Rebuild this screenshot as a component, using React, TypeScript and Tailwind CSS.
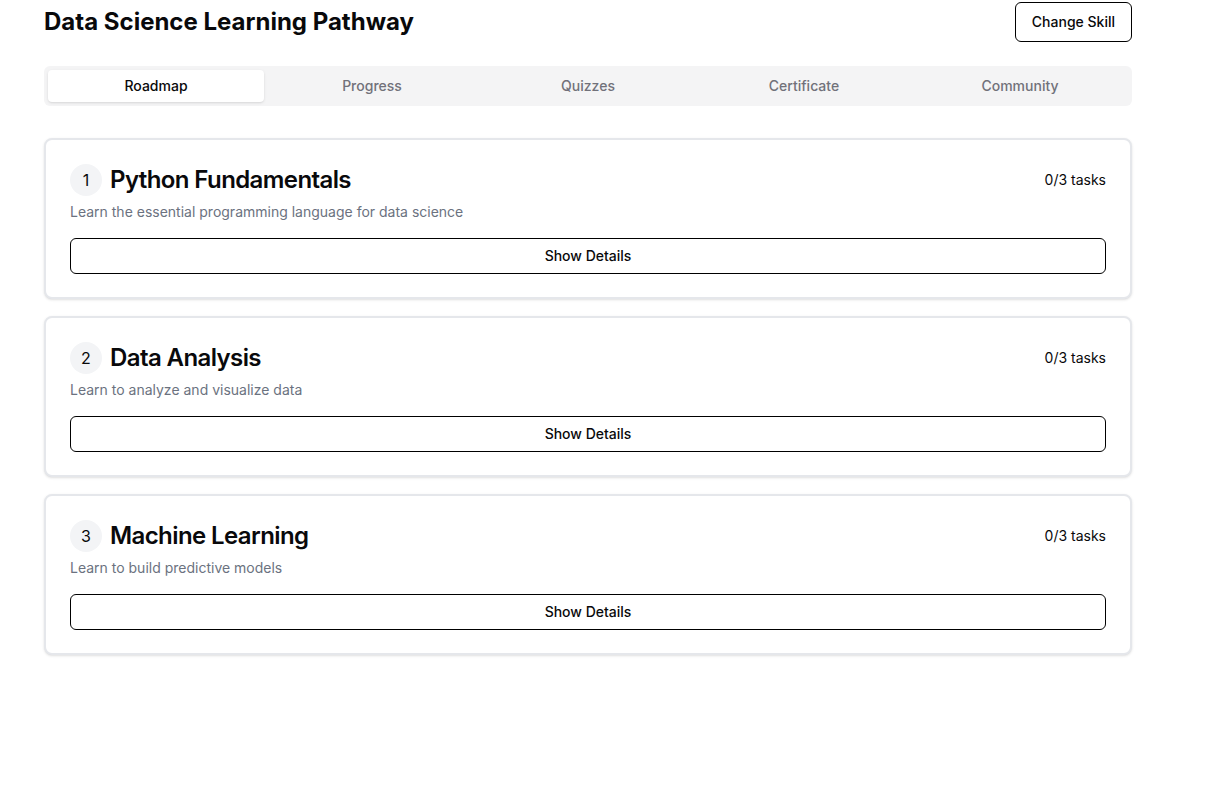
import { useState } from "react";

const tabs = ["Roadmap", "Progress", "Quizzes", "Certificate", "Community"];

const modules = [
  {
    id: 1,
    title: "Python Fundamentals",
    description: "Learn the essential programming language for data science",
  },
  { id: 2, title: "Data Analysis", description: "Learn to analyze and visualize data" },
  { id: 3, title: "Machine Learning", description: "Learn to build predictive models" },
];

export default function App() {
  const [active, setActive] = useState("Roadmap");

  return (
    <div
      className="min-h-screen bg-white text-[#09090b]"
      style={{ fontFamily: "Inter, 'Noto Sans', sans-serif" }}
    >
      <div className="ml-[44px] w-[1088px] pt-[2px]">
        {/* Header */}
        <div className="flex h-10 items-center justify-between">
          <h1 className="text-2xl font-bold">Data Science Learning Pathway</h1>
          <button className="h-10 rounded-md border border-black bg-white px-4 text-sm font-medium">
            Change Skill
          </button>
        </div>

        {/* Tabs */}
        <div className="mt-6 grid h-10 grid-cols-5 rounded-md bg-[#f4f4f5] p-1">
          {tabs.map((t) => (
            <button
              key={t}
              onClick={() => setActive(t)}
              className={
                t === active
                  ? "rounded-sm bg-white text-sm font-medium text-[#09090b] shadow-sm"
                  : "rounded-sm text-sm font-medium text-[#71717a]"
              }
            >
              {t}
            </button>
          ))}
        </div>

        {/* Modules */}
        <div className="mt-8 flex flex-col gap-[17px]">
          {modules.map((m) => (
            <div
              key={m.id}
              className="rounded-lg border-2 border-[#e5e7eb] bg-white px-6 pt-6 pb-[23px] shadow-sm"
            >
              <div className="flex items-center justify-between">
                <div className="flex items-center gap-2">
                  <span className="flex h-8 w-8 items-center justify-center rounded-full bg-[#f3f4f6] text-base">
                    {m.id}
                  </span>
                  <h2 className="text-2xl font-semibold tracking-tight">{m.title}</h2>
                </div>
                <span className="text-sm">0/3 tasks</span>
              </div>
              <p className="mt-1.5 text-sm text-[#6b7280]">{m.description}</p>
              <button className="mt-4 h-9 w-full rounded-md border border-black bg-white text-sm font-medium">
                Show Details
              </button>
            </div>
          ))}
        </div>
      </div>
    </div>
  );
}
